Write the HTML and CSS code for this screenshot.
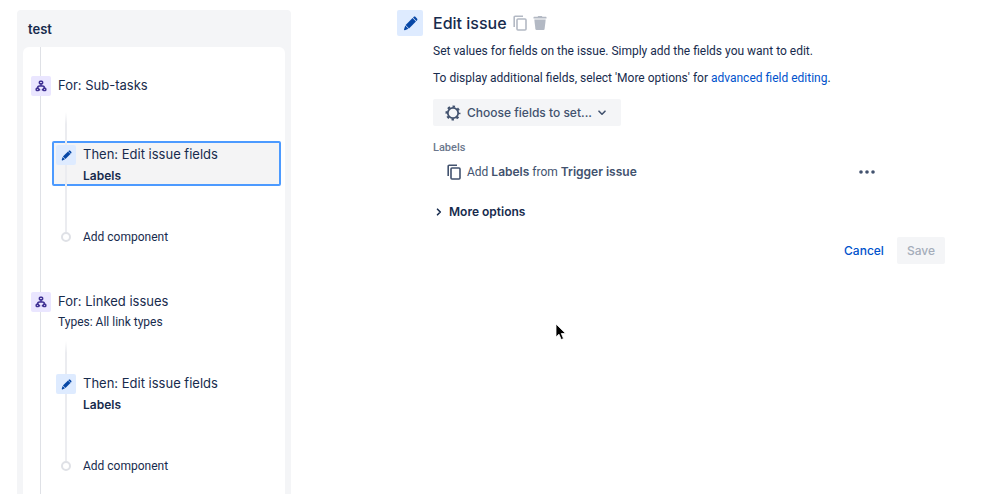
FILE: index.html
```html
<!doctype html>
<html lang="en">
<head>
    <meta charset="UTF-8">
    <meta name="viewport" content="width=device-width, initial-scale=1.0">
    <title>Edit issue</title>
    <link rel="stylesheet" href="styles.css">
</head>
<body>
<svg class="defs" width="0" height="0" aria-hidden="true">
    <symbol id="pencil" viewBox="0 0 16 16">
        <path d="M10.2 2.2l3.6 3.6-7.4 7.4-3.6-3.6z"/>
        <path d="M10.7 1.7l.6-.6c.6-.6 1.5-.6 2.1 0l1.5 1.5c.6.6.6 1.5 0 2.1l-.6.6z"/>
        <path d="M2.4 10.2l3.4 3.4-3.8 1.5c-.6.2-1.1-.3-.9-.9z"/>
    </symbol>
    <symbol id="tree" viewBox="0 0 12 12">
        <g fill="none" stroke="currentColor" stroke-width="1.5">
            <rect x="4.4" y="1.2" width="3.2" height="2.6" rx=".8"/>
            <rect x="1.2" y="8.2" width="2.6" height="2.4" rx=".8"/>
            <rect x="8.2" y="8.2" width="2.6" height="2.4" rx=".8"/>
            <path d="M6 3.7V6M2.5 8.3c0-1.6.9-2.3 2-2.3h3c1.1 0 2 .7 2 2.3M3.8 9.7h1.4M6.8 9.7h1.4"/>
        </g>
    </symbol>
    <symbol id="copy" viewBox="0 0 14 16">
        <g fill="none" stroke="currentColor" stroke-width="1.6">
            <path d="M1.2 12V2.2c0-.6.4-1 1-1H10"/>
            <rect x="4" y="4" width="9" height="11" rx="1"/>
        </g>
    </symbol>
</svg>
<div class="page">
    <aside class="rule">
        <h2>test</h2>
        <div class="flow">
            <section class="group">
                <div class="head">
                    <span class="icon purple"><svg width="12" height="12"><use href="#tree"/></svg></span>
                    <div>
                        <h3>For: Sub-tasks</h3>
                    </div>
                </div>
                <div class="branch">
                    <div class="card selected">
                        <span class="icon blue"><svg width="11" height="11"><use href="#pencil"/></svg></span>
                        <div>
                            <h3>Then: Edit issue fields</h3>
                            <p><b>Labels</b></p>
                        </div>
                    </div>
                    <button class="add" type="button"><span class="dot"></span>Add component</button>
                </div>
            </section>
            <section class="group">
                <div class="head">
                    <span class="icon purple"><svg width="12" height="12"><use href="#tree"/></svg></span>
                    <div>
                        <h3>For: Linked issues</h3>
                        <p>Types: All link types</p>
                    </div>
                </div>
                <div class="branch">
                    <div class="card">
                        <span class="icon blue"><svg width="11" height="11"><use href="#pencil"/></svg></span>
                        <div>
                            <h3>Then: Edit issue fields</h3>
                            <p><b>Labels</b></p>
                        </div>
                    </div>
                    <button class="add" type="button"><span class="dot"></span>Add component</button>
                </div>
            </section>
        </div>
    </aside>
    <main class="editor">
        <span class="icon blue big"><svg width="15" height="15"><use href="#pencil"/></svg></span>
        <div class="content">
            <header class="title">
                <h1>Edit issue</h1>
                <button class="tool" type="button" aria-label="Copy"><svg width="14" height="16"><use href="#copy"/></svg></button>
                <button class="tool" type="button" aria-label="Delete">
                    <svg width="14" height="16" viewBox="0 0 14 16">
                        <path d="M1 1.8h3.6L5.2 1h3.6l.6.8H13c.3 0 .5.2.5.5v1.2H.5V2.3c0-.3.2-.5.5-.5z"/>
                        <path d="M1.3 4.6h11.4L11.6 14c-.1.6-.5 1-1.1 1h-7c-.6 0-1-.4-1.1-1z"/>
                    </svg>
                </button>
            </header>
            <p class="text">Set values for fields on the issue. Simply add the fields you want to edit.</p>
            <p class="text">To display additional fields, select 'More options' for <a href="#">advanced field editing</a>.</p>
            <button class="choose" type="button">
                <svg width="16" height="16" viewBox="0 0 16 16">
                    <circle cx="8" cy="8" r="5.2" fill="none" stroke="currentColor" stroke-width="1.8"/>
                    <circle cx="8" cy="8" r="6.5" fill="none" stroke="currentColor" stroke-width="2" stroke-dasharray="2.5 2.605" stroke-dashoffset="1.25"/>
                </svg>
                Choose fields to set...
                <svg width="8" height="6" viewBox="0 0 8 6"><path d="M1 1.2l3 3 3-3" fill="none" stroke="currentColor" stroke-width="1.6" stroke-linecap="round" stroke-linejoin="round"/></svg>
            </button>
            <h4>Labels</h4>
            <div class="field">
                <svg width="14" height="16"><use href="#copy"/></svg>
                <span>Add <b>Labels</b> from <b>Trigger issue</b></span>
                <button class="more" type="button" aria-label="More actions">
                    <svg width="16" height="4" viewBox="0 0 16 4"><circle cx="2" cy="2" r="1.8"/><circle cx="8" cy="2" r="1.8"/><circle cx="14" cy="2" r="1.8"/></svg>
                </button>
            </div>
            <button class="options" type="button">
                <svg width="6" height="8" viewBox="0 0 6 8"><path d="M1.5 1.2L4.3 4 1.5 6.8" fill="none" stroke="currentColor" stroke-width="1.6" stroke-linecap="round" stroke-linejoin="round"/></svg>
                More options
            </button>
            <footer class="actions">
                <button class="cancel" type="button">Cancel</button>
                <button class="save" type="button" disabled>Save</button>
            </footer>
        </div>
    </main>
</div>
<svg class="cursor" width="12" height="18" viewBox="0 0 12 18">
    <path d="M1 1v13l3-2.8L6.2 16.6l2.3-1-2.2-5.1H10.6z" stroke="#fff" stroke-width=".8"/>
</svg>
</body>
</html>
```
FILE: styles.css
```css
*{
    box-sizing: border-box;
    margin: 0;
    padding: 0;
}
body{
    font: 12px/18px Roboto, "Liberation Sans", sans-serif;
    color: #172b4d;
    background: #fff;
}
h1, h2, h3, b, .choose, .options, .actions{
    font-family: Inter, "Liberation Sans", sans-serif;
}
h3{
    font-size: 13px;
    font-weight: 400;
    line-height: 18px;
}
b{
    font-weight: 600;
}
button{
    font: inherit;
    color: inherit;
    background: none;
    border: 0;
    cursor: pointer;
}
svg{
    display: block;
    flex: none;
    fill: currentColor;
}
a{
    color: #0052cc;
    text-decoration: none;
}
.defs{
    position: absolute;
}
.page{
    display: flex;
    height: 100vh;
    padding: 10px 54px 0 17px;
    overflow: hidden;
}

/* rule tree */
.rule{
    flex: 0 0 274px;
    padding: 0 6px;
    background: #f4f5f7;
    border-radius: 4px 4px 0 0;
}
.rule h2{
    padding: 10px 5px 9px;
    font-size: 13px;
    font-weight: 600;
    line-height: 18px;
}
.flow{
    position: relative;
    padding: 29px 4px 0 8px;
    background: #fff;
    border-radius: 6px 6px 0 0;
}
.flow::before{
    content: "";
    position: absolute;
    left: 17px;
    top: 0;
    bottom: 0;
    width: 1px;
    background: #dfe1e6;
}
.group{
    padding-bottom: 46px;
}
.head{
    display: flex;
    gap: 7px;
    min-height: 25px;
}
.head p{
    margin-top: 4px;
    line-height: 16px;
}
.icon{
    position: relative;
    display: flex;
    flex: none;
    align-items: center;
    justify-content: center;
    width: 20px;
    height: 20px;
    border-radius: 2px;
}
.purple{
    color: #403294;
    background: #eae6ff;
}
.blue{
    color: #0747a6;
    background: #deebff;
}
.branch{
    position: relative;
    padding: 40px 0 0 21px;
}
.branch::before{
    content: "";
    position: absolute;
    z-index: 1;
    left: 34px;
    top: 11px;
    bottom: 14px;
    width: 2px;
    background: linear-gradient(rgba(235, 236, 240, 0), #ebecf0 12px);
}
.card{
    display: flex;
    gap: 7px;
    height: 45px;
    padding: 2px;
    border: 2px solid transparent;
    border-radius: 2px;
}
.card .icon{
    z-index: 2;
}
.card p{
    margin-top: 4px;
    line-height: 18px;
}
.selected{
    background: #f4f4f5;
    border-color: #4c9aff;
}
.add{
    display: flex;
    align-items: center;
    gap: 12px;
    margin-top: 42px;
    padding-left: 9px;
}
.dot{
    position: relative;
    z-index: 2;
    width: 10px;
    height: 10px;
    background: #fff;
    border: 2px solid #dfe1e6;
    border-radius: 50%;
}

/* edit form */
.editor{
    display: flex;
    flex: 1;
    gap: 10px;
    min-width: 0;
    padding-left: 106px;
}
.big{
    width: 26px;
    height: 26px;
}
.content{
    flex: 1;
}
.title{
    display: flex;
    align-items: center;
    gap: 6px;
    height: 26px;
    margin-bottom: 6px;
}
.title h1{
    font-size: 16px;
    font-weight: 500;
    line-height: 24px;
}
.tool{
    color: #b3b9c4;
}
.text{
    margin-bottom: 9px;
}
.choose{
    display: flex;
    align-items: center;
    gap: 6px;
    height: 27px;
    margin-top: 12px;
    padding: 0 15px 0 12px;
    color: #42526e;
    font-weight: 500;
    background: #f4f5f7;
    border-radius: 2px;
}
h4{
    margin-top: 14px;
    color: #6b778c;
    font-size: 11px;
    font-weight: 500;
    line-height: 16px;
}
.field{
    display: flex;
    align-items: center;
    gap: 6px;
    margin-top: 7px;
    padding: 0 70px 0 14px;
    color: #42526e;
}
.more{
    margin-left: auto;
}
.options{
    display: flex;
    align-items: center;
    gap: 7px;
    margin-top: 22px;
    padding-left: 3px;
    font-weight: 600;
}
.actions{
    display: flex;
    justify-content: flex-end;
    gap: 13px;
    height: 27px;
    margin-top: 16px;
    font-weight: 500;
}
.cancel{
    color: #0052cc;
}
.save{
    padding: 0 10px;
    color: #a5adba;
    background: #f4f5f7;
    border-radius: 2px;
    cursor: default;
}
.cursor{
    position: absolute;
    left: 555px;
    top: 323px;
    fill: #000;
}
```
